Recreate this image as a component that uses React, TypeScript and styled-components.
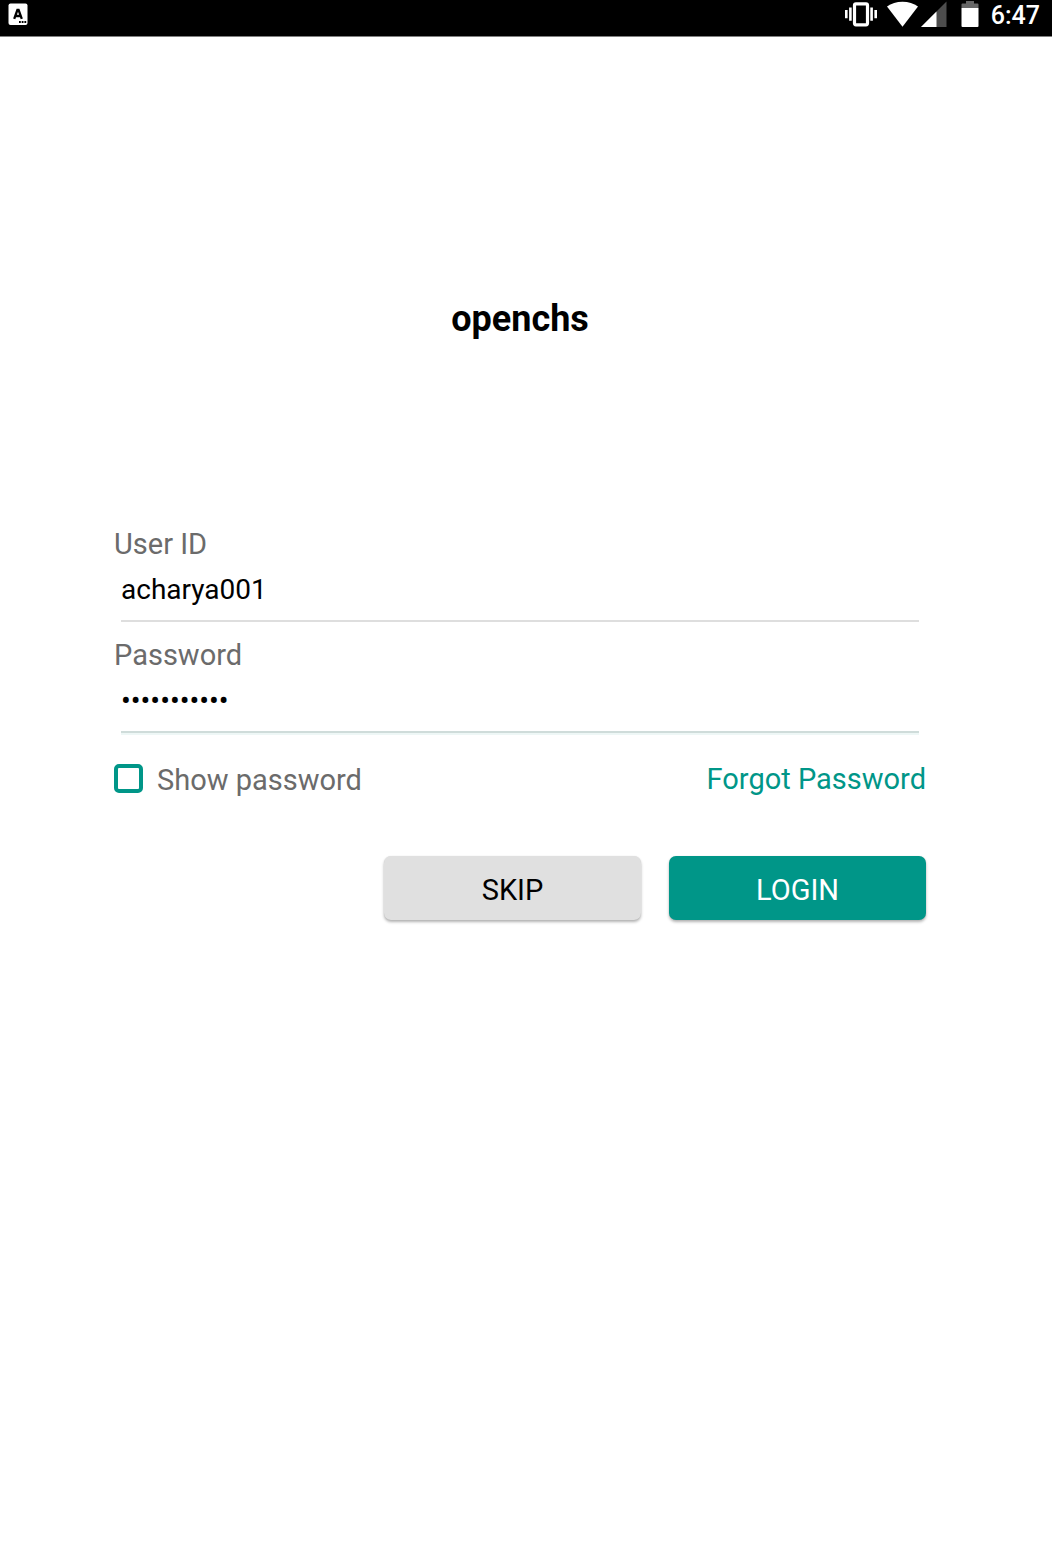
import React, { useState } from "react";
import styled, { createGlobalStyle } from "styled-components";

const teal = "#009688";

const GlobalStyle = createGlobalStyle`
  * { box-sizing: border-box; }
  body {
    margin: 0;
    min-height: 100vh;
    background: #fff;
    color: #000;
    font-family: Roboto, "Liberation Sans", sans-serif;
  }
`;

const StatusBar = styled.header`
  display: flex;
  align-items: flex-start;
  justify-content: space-between;
  height: 37px;
  padding: 0 12px 0 8px;
  background: #000;
  border-bottom: 1px solid #808080;
  color: #fff;
`;

const StatusGroup = styled.div`
  display: flex;
  align-items: flex-start;
`;

const Glyph = styled.svg<{ $after?: number }>`
  display: block;
  flex: none;
  margin-right: ${(p) => p.$after ?? 0}px;
`;

const Clock = styled.time`
  font-size: 25px;
  line-height: 32px;
  font-weight: 500;
`;

const Main = styled.main`
  padding: 0 126px 80px 114px;
`;

const Title = styled.h1`
  margin: 0;
  padding: 260px 0 186px;
  font-size: 36px;
  line-height: 44px;
  font-weight: 700;
  text-align: center;
`;

const Form = styled.form`
  display: flex;
  flex-direction: column;
  gap: 16px;
`;

const Field = styled.div`
  display: flex;
  flex-direction: column;
`;

const Label = styled.label`
  font-size: 29px;
  line-height: 34px;
  color: #6b6b6b;
`;

const TextInput = styled.input<{ $active?: boolean }>`
  height: 61px;
  margin: 0 7px;
  padding: 0 0 2px;
  border: 0;
  border-bottom: 2px solid ${(p) => (p.$active ? "#cfdcda" : "#dedede")};
  box-shadow: ${(p) => (p.$active ? "0 2px 0 #eef7f6" : "none")};
  border-radius: 0;
  outline: none;
  background: transparent;
  color: #000;
  font-family: inherit;
  font-size: ${(p) => (p.type === "password" ? 29 : 28)}px;
`;

const OptionsRow = styled.div`
  display: flex;
  align-items: center;
  justify-content: space-between;
  padding-top: 10px;
`;

const Option = styled.div`
  display: flex;
  align-items: center;
  gap: 14px;
`;

const OptionLabel = styled(Label)`
  padding-top: 4px;
`;

const Checkbox = styled.input`
  appearance: none;
  width: 29px;
  height: 29px;
  margin: 0;
  border: 4px solid ${teal};
  border-radius: 5px;
  background: #fff;
  &:checked {
    background: ${teal};
    box-shadow: inset 0 0 0 4px #fff;
  }
`;

const ForgotLink = styled.a`
  padding-top: 2px;
  font-size: 29px;
  line-height: 34px;
  color: ${teal};
  text-decoration: none;
`;

const Actions = styled.div`
  display: flex;
  justify-content: flex-end;
  gap: 28px;
  padding-top: 43px;
`;

const Button = styled.button<{ $primary?: boolean }>`
  width: 257px;
  height: 64px;
  padding: 3px 0 0;
  border: 0;
  border-radius: 7px;
  background: ${(p) => (p.$primary ? teal : "#e0e0e0")};
  color: ${(p) => (p.$primary ? "#fff" : "#000")};
  box-shadow: 0 2px 3px rgba(0, 0, 0, 0.3), 0 0 1px rgba(0, 0, 0, 0.1);
  font-family: inherit;
  font-size: 29px;
  line-height: 34px;
`;

function KeyboardIcon() {
  return (
    <Glyph width="20" height="28" viewBox="0 0 20 28" aria-hidden="true">
      <rect x="0.5" y="3.5" width="19" height="21.5" rx="2" fill="#fff" />
      <path d="M6.2 18.8 9.4 10h1.2l3.2 8.8M7.5 16h5" fill="none" stroke="#000" strokeWidth="2.3" />
      <path d="M11 21h1.8v2h-1.8zM13.7 21h1.8v2h-1.8zM16.4 21h1.8v2h-1.8z" fill="#000" />
    </Glyph>
  );
}

function VibrateIcon() {
  return (
    <Glyph $after={10} width="32" height="28" viewBox="0 0 32 28" aria-hidden="true">
      <rect x="9.5" y="3.8" width="13" height="21" rx="1.5" fill="none" stroke="#fff" strokeWidth="3.2" />
      <path d="M5.4 7.5v13.200M26.600 7.500v13.200M1.300 10v8.300M30.700 10v8.300" stroke="#fff" strokeWidth="2.6" />
    </Glyph>
  );
}

function WifiIcon() {
  return (
    <Glyph $after={3} width="31" height="28" viewBox="0 0 31 28" aria-hidden="true">
      <path d="M15.5 26.7 0 6.6C4.2 3.3 9.6 1.8 15.5 1.8S26.8 3.3 31 6.6Z" fill="#fff" />
    </Glyph>
  );
}

function SignalIcon() {
  return (
    <Glyph $after={14} width="26" height="28" viewBox="0 0 26 28" aria-hidden="true">
      <path d="M0 27 25.5 1.5V27Z" fill="#4d4d4d" />
      <path d="M0 27 15.5 11.5V27Z" fill="#fff" />
    </Glyph>
  );
}

function BatteryIcon() {
  return (
    <Glyph $after={12} width="18" height="28" viewBox="0 0 18 28" aria-hidden="true">
      <path d="M5 1h8v2.5h3.5q1 0 1 1V8H0.5V4.5q0-1 1-1H5Z" fill="#666" />
      <path d="M0.5 8h17v18q0 1-1 1h-15q-1 0-1-1Z" fill="#fff" />
    </Glyph>
  );
}

export default function App() {
  const [userId, setUserId] = useState("acharya001");
  const [password, setPassword] = useState("password001");
  const [visible, setVisible] = useState(false);

  return (
    <>
      <GlobalStyle />
      <StatusBar>
        <KeyboardIcon />
        <StatusGroup>
          <VibrateIcon />
          <WifiIcon />
          <SignalIcon />
          <BatteryIcon />
          <Clock>6:47</Clock>
        </StatusGroup>
      </StatusBar>
      <Main>
        <Title>openchs</Title>
        <Form onSubmit={(e) => e.preventDefault()}>
          <Field>
            <Label htmlFor="user-id">User ID</Label>
            <TextInput
              id="user-id"
              type="text"
              value={userId}
              onChange={(e) => setUserId(e.target.value)}
            />
          </Field>
          <Field>
            <Label htmlFor="password">Password</Label>
            <TextInput
              id="password"
              $active
              type={visible ? "text" : "password"}
              value={password}
              onChange={(e) => setPassword(e.target.value)}
            />
          </Field>
          <OptionsRow>
            <Option>
              <Checkbox
                id="show-password"
                type="checkbox"
                checked={visible}
                onChange={(e) => setVisible(e.target.checked)}
              />
              <OptionLabel htmlFor="show-password">Show password</OptionLabel>
            </Option>
            <ForgotLink href="#forgot">Forgot Password</ForgotLink>
          </OptionsRow>
          <Actions>
            <Button type="button">SKIP</Button>
            <Button type="submit" $primary>
              LOGIN
            </Button>
          </Actions>
        </Form>
      </Main>
    </>
  );
}
